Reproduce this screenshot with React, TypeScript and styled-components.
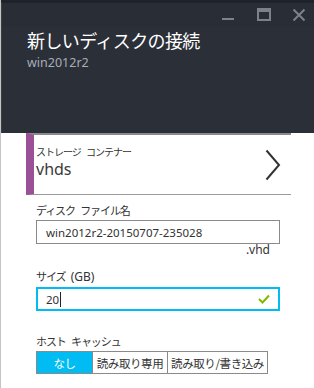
import React from "react";
import styled, { createGlobalStyle } from "styled-components";

const GlobalStyle = createGlobalStyle`
  html, body {
    margin: 0;
    padding: 0;
    background: #ffffff;
  }
  body {
    font-family: "Segoe UI", "Noto Sans", "Noto Sans CJK JP", sans-serif;
  }
`;

const Blade = styled.div`
  width: 314px;
  height: 388px;
  box-sizing: border-box;
  border-left: 1px solid #c4c4c4;
  background: #ffffff;
  overflow: hidden;
  display: flex;
  flex-direction: column;
`;

const Header = styled.div`
  height: 133px;
  background: #2b2f38;
  border-top: 3px solid #1f2228;
  box-sizing: border-box;
  margin-left: -1px;
  border-left: 2px solid #3b3e46;
`;

const TitleBar = styled.div`
  height: 24px;
  background: #292d35;
  display: flex;
  justify-content: flex-end;
  align-items: center;
  gap: 5.5px;
`;

const CtrlButton = styled.div`
  width: 30px;
  height: 24px;
  display: flex;
  align-items: center;
  justify-content: center;
`;

const Title = styled.h1`
  margin: 1px 0 0 25px;
  font-family: "Segoe UI", "Noto Sans CJK JP", sans-serif;
  font-weight: 400;
  font-size: 18px;
  line-height: 24px;
  color: #ffffff;
  letter-spacing: -0.6px;
`;

const Subtitle = styled.div`
  margin: 3px 0 0 25px;
  font-size: 12.5px;
  line-height: 16px;
  color: #a7adb8;
  font-family: "Noto Sans", sans-serif;
`;

const Content = styled.div`
  padding-left: 25px;
  display: flex;
  flex-direction: column;
`;

const Selector = styled.div`
  width: 265px;
  height: 62px;
  box-sizing: border-box;
  border-top: 2px solid #8a8a8a;
  border-bottom: 1px solid #9a9a9a;
  border-left: 8px solid #9b4f96;
  display: flex;
  align-items: center;
  justify-content: space-between;
  padding: 0 10px 0 2px;
`;

const SelectorText = styled.div`
  display: flex;
  flex-direction: column;
  margin-top: -5px;
`;

const SmallCaption = styled.span`
  font-family: "Noto Sans CJK JP", sans-serif;
  font-size: 10px;
  line-height: 14px;
  color: #333333;
  letter-spacing: -1px;
  word-spacing: 4px;
`;

const SelectorValue = styled.span`
  font-family: "Noto Sans", sans-serif;
  font-size: 16px;
  line-height: 20px;
  color: #3a3a3a;
`;

const Field = styled.div<{ $top: number }>`
  margin-top: ${(p) => p.$top}px;
  padding-left: 10px;
  display: flex;
  flex-direction: column;
`;

const Label = styled.label`
  font-family: "Noto Sans CJK JP", sans-serif;
  font-size: 11px;
  line-height: 16px;
  color: #333333;
  letter-spacing: -1.1px;
  word-spacing: 4px;
  margin-bottom: 2px;
`;

const Latin = styled.span`
  font-family: "Noto Sans", sans-serif;
  font-size: 12px;
  letter-spacing: 0;
`;

const InputBox = styled.div<{ $focused?: boolean }>`
  width: 244px;
  height: 24px;
  box-sizing: border-box;
  border: ${(p) => (p.$focused ? "2px solid #00bcf2" : "1px solid #8a8a8a")};
  display: flex;
  align-items: center;
  padding: 0 ${(p) => (p.$focused ? 8 : 9)}px;
  justify-content: space-between;
`;

const InputText = styled.span`
  font-family: "Noto Sans", sans-serif;
  font-size: 11.5px;
  color: #333333;
  display: flex;
  align-items: center;
`;

const Caret = styled.span`
  display: inline-block;
  width: 1px;
  height: 15px;
  background: #222222;
  margin-left: 1px;
`;

const Suffix = styled.div`
  width: 234px;
  text-align: right;
  font-family: "Noto Sans", sans-serif;
  font-size: 12px;
  line-height: 12px;
  color: #333333;
`;

const Segmented = styled.div`
  display: flex;
  height: 23px;
  box-sizing: border-box;
  border: 1px solid #8a8a8a;
  align-self: flex-start;
`;

const Segment = styled.div<{ $active?: boolean; $w: number }>`
  width: ${(p) => p.$w}px;
  box-sizing: border-box;
  display: flex;
  align-items: center;
  justify-content: center;
  font-family: "Noto Sans CJK JP", sans-serif;
  font-size: 11.5px;
  letter-spacing: -0.4px;
  color: ${(p) => (p.$active ? "#ffffff" : "#333333")};
  background: ${(p) => (p.$active ? "#00bcf2" : "#ffffff")};
  & + & {
    border-left: 1px solid #8a8a8a;
  }
`;

export default function App() {
  return (
    <>
      <GlobalStyle />
      <Blade>
        <Header>
          <TitleBar>
            <CtrlButton>
              <svg width="14" height="14" viewBox="0 0 14 14">
                <rect x="1" y="10" width="12" height="2" fill="#7d8189" />
              </svg>
            </CtrlButton>
            <CtrlButton>
              <svg width="14" height="14" viewBox="0 0 14 14">
                <rect x="1" y="1" width="12" height="11" fill="none" stroke="#7d8189" strokeWidth="2" />
                <rect x="1" y="1" width="12" height="3" fill="#7d8189" />
              </svg>
            </CtrlButton>
            <CtrlButton>
              <svg width="14" height="14" viewBox="0 0 14 14">
                <path d="M1.5 1.5 L12.5 12.5 M12.5 1.5 L1.5 12.5" stroke="#7d8189" strokeWidth="2" />
              </svg>
            </CtrlButton>
          </TitleBar>
          <Title>新しいディスクの接続</Title>
          <Subtitle>win2012r2</Subtitle>
        </Header>
        <Content>
          <Selector>
            <SelectorText>
              <SmallCaption>ストレージ コンテナー</SmallCaption>
              <SelectorValue>vhds</SelectorValue>
            </SelectorText>
            <svg width="16" height="32" viewBox="0 0 16 32">
              <path d="M1.5 1.5 L14 16 L1.5 30.5" fill="none" stroke="#333333" strokeWidth="2" />
            </svg>
          </Selector>
          <Field $top={7}>
            <Label>ディスク ファイル名</Label>
            <InputBox>
              <InputText>win2012r2-20150707-235028</InputText>
            </InputBox>
            <Suffix>.vhd</Suffix>
          </Field>
          <Field $top={12}>
            <Label>
              サイズ <Latin>(GB)</Latin>
            </Label>
            <InputBox $focused>
              <InputText>
                20
                <Caret />
              </InputText>
              <svg width="12" height="10" viewBox="0 0 12 10">
                <path d="M1 5 L4.5 8.5 L11 1.5" fill="none" stroke="#7fba00" strokeWidth="2" />
              </svg>
            </InputBox>
          </Field>
          <Field $top={22}>
            <Label>ホスト キャッシュ</Label>
            <Segmented>
              <Segment $active $w={55}>なし</Segment>
              <Segment $w={75}>読み取り専用</Segment>
              <Segment $w={100}>読み取り/書き込み</Segment>
            </Segmented>
          </Field>
        </Content>
      </Blade>
    </>
  );
}
